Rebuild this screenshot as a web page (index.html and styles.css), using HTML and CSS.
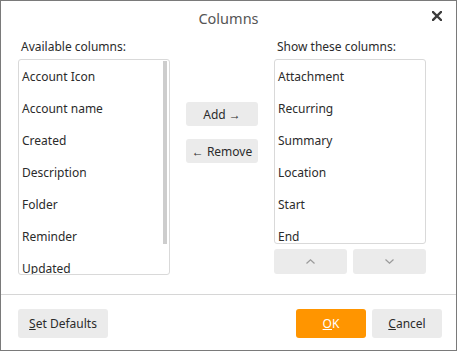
FILE: index.html
```html
<!DOCTYPE html>
<html lang="en">
<head>
    <meta charset="UTF-8">
    <title>Columns</title>
    <link rel="stylesheet" href="styles.css">
</head>
<body>
    <div class="dialog">
        <header class="dialog-header">
            <h1 class="title">Columns</h1>
            <button class="close" aria-label="Close">
                <svg width="10" height="10" viewBox="0 0 10 10">
                    <path d="M1 1 L9 9 M9 1 L1 9" stroke="#3c3c3c" stroke-width="2.4" stroke-linecap="square"/>
                </svg>
            </button>
        </header>

        <main class="dialog-body">
            <div class="column">
                <label class="list-label">Available columns:</label>
                <div class="list list-available">
                    <div class="item">Account Icon</div>
                    <div class="item">Account name</div>
                    <div class="item">Created</div>
                    <div class="item">Description</div>
                    <div class="item">Folder</div>
                    <div class="item">Reminder</div>
                    <div class="item">Updated</div>
                    <div class="scroll-thumb"></div>
                </div>
            </div>

            <div class="actions">
                <button class="btn btn-small">Add <span class="arrow">&rarr;</span></button>
                <button class="btn btn-small"><span class="arrow">&larr;</span> Remove</button>
            </div>

            <div class="column">
                <label class="list-label">Show these columns:</label>
                <div class="list list-shown">
                    <div class="item">Attachment</div>
                    <div class="item">Recurring</div>
                    <div class="item">Summary</div>
                    <div class="item">Location</div>
                    <div class="item">Start</div>
                    <div class="item">End</div>
                </div>
                <div class="order-buttons">
                    <button class="btn btn-order" aria-label="Move up">
                        <svg width="9" height="5" viewBox="0 0 9 5"><path d="M0.5 4.5 L4.5 0.8 L8.5 4.5" fill="none" stroke="#9a9a9a" stroke-width="1.2"/></svg>
                    </button>
                    <button class="btn btn-order" aria-label="Move down">
                        <svg width="9" height="5" viewBox="0 0 9 5"><path d="M0.5 0.5 L4.5 4.2 L8.5 0.5" fill="none" stroke="#9a9a9a" stroke-width="1.2"/></svg>
                    </button>
                </div>
            </div>
        </main>

        <footer class="dialog-footer">
            <button class="btn btn-footer btn-defaults"><u>S</u>et Defaults</button>
            <div class="footer-right">
                <button class="btn btn-footer btn-ok"><u>O</u>K</button>
                <button class="btn btn-footer"><u>C</u>ancel</button>
            </div>
        </footer>
    </div>
</body>
</html>
```

FILE: styles.css
```css
* {
    margin: 0;
    padding: 0;
    box-sizing: border-box;
}

body {
    font-family: "Noto Sans", "Open Sans", sans-serif;
    font-size: 12px;
    color: #2b2b2b;
    background: #fff;
}

.dialog {
    width: 457px;
    height: 351px;
    border: 1px solid #7a7a7a;
    display: flex;
    flex-direction: column;
}

.dialog-header {
    position: relative;
    height: 33px;
    display: flex;
    justify-content: center;
    align-items: center;
}

.title {
    font-size: 14.5px;
    font-weight: normal;
    color: #555;
    margin-top: 1px;
}

.close {
    position: absolute;
    right: 14px;
    top: 10px;
    background: none;
    border: none;
    width: 10px;
    height: 10px;
    display: flex;
}

.dialog-body {
    display: flex;
    padding: 0 0 0 17px;
    height: 260px;
}

.column {
    width: 152px;
    display: flex;
    flex-direction: column;
}

.list-label {
    display: block;
    height: 25px;
    padding: 5px 0 0 3px;
    line-height: 15px;
}

.list {
    position: relative;
    border: 1px solid #d9d9d9;
    border-radius: 3px;
    overflow: hidden;
    padding-top: 1px;
}

.list-available {
    height: 216px;
}

.list-shown {
    height: 185px;
}

.item {
    height: 32px;
    line-height: 32px;
    padding-left: 3px;
    white-space: nowrap;
}

.scroll-thumb {
    position: absolute;
    right: 2px;
    top: 1px;
    width: 4px;
    height: 183px;
    background: #cdcdcd;
}

.actions {
    width: 104px;
    display: flex;
    flex-direction: column;
    align-items: center;
    gap: 13px;
    padding-top: 68px;
}

.btn {
    font-family: inherit;
    font-size: 12px;
    color: #2b2b2b;
    background: #ebebeb;
    border: none;
    border-radius: 3px;
}

.arrow {
    font-family: "Liberation Sans", sans-serif;
}

.btn-small {
    width: 72px;
    height: 24px;
}

.order-buttons {
    display: flex;
    gap: 6px;
    margin-top: 5px;
}

.btn-order {
    width: 73px;
    height: 25px;
    display: flex;
    align-items: center;
    justify-content: center;
}

.dialog-footer {
    flex: 1;
    border-top: 1px solid #d6d6d6;
    display: flex;
    justify-content: space-between;
    align-items: flex-start;
    padding: 14px 14px 0 17px;
}

.footer-right {
    display: flex;
    gap: 6px;
}

.btn-footer {
    width: 70px;
    height: 29px;
}

.btn-defaults {
    width: 90px;
}

.btn-ok {
    background: #ff9500;
    color: #fff;
}
```
